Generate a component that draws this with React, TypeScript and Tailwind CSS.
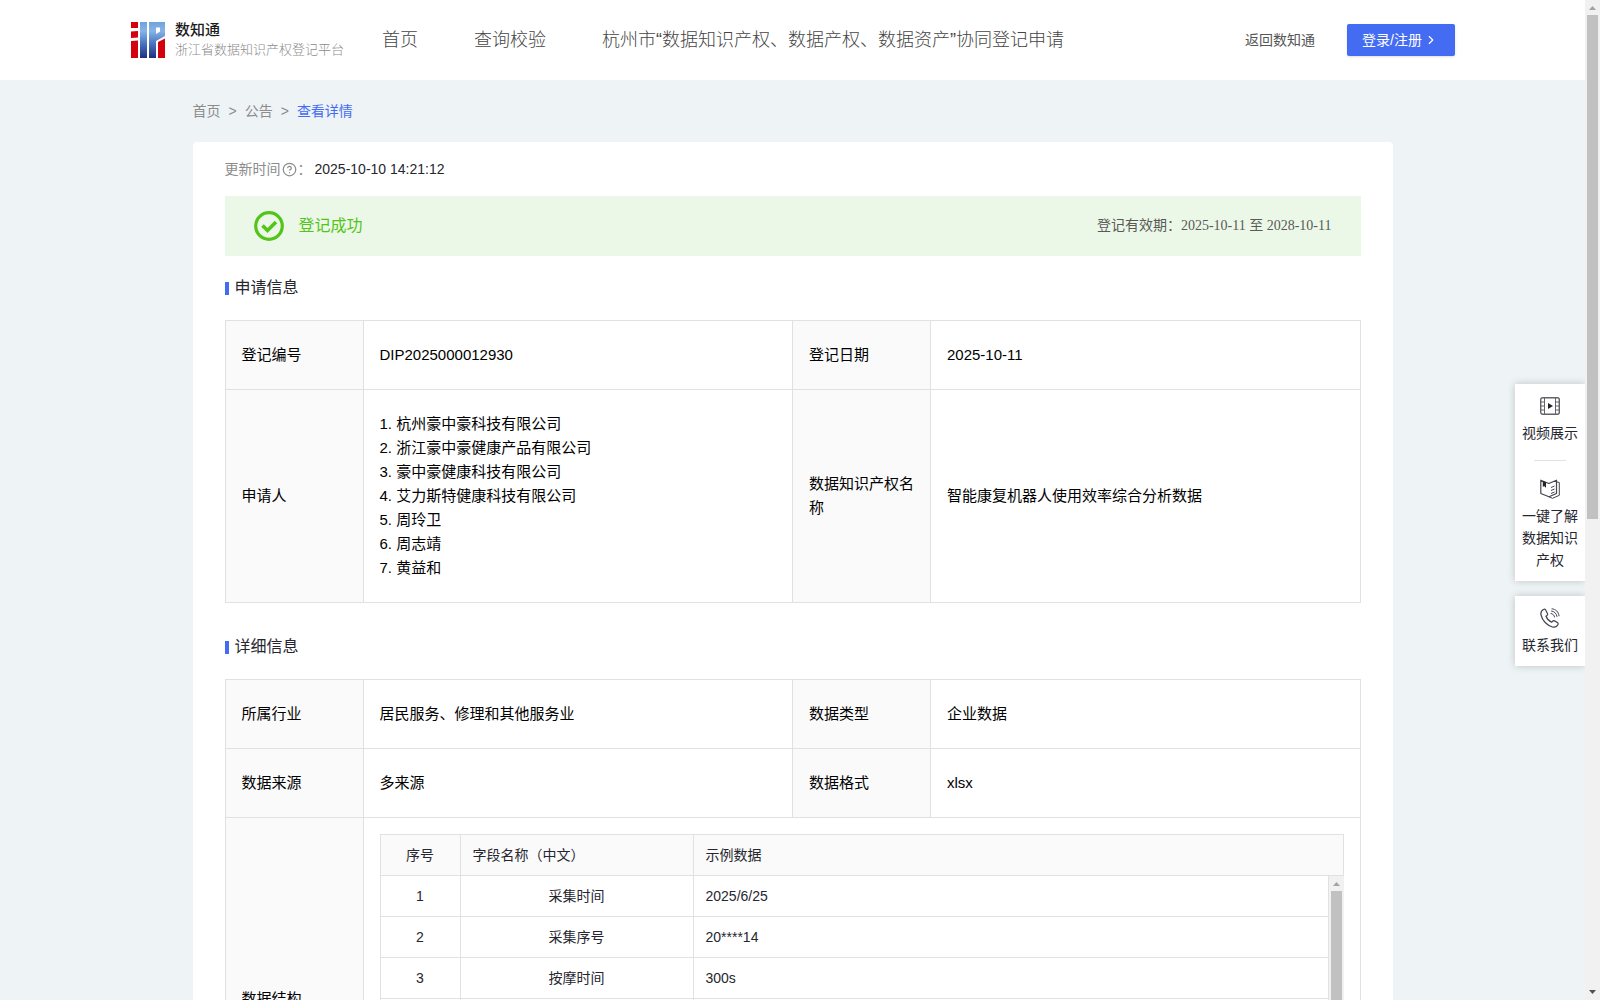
import React from 'react';
import { ChevronRight, CircleHelp } from 'lucide-react';

const cell = 'border border-[#e1e1e1] px-4 py-[22px] text-left font-normal align-middle';
const labelCell = `${cell} bg-[#fafafa]`;
const gridCell = 'border border-[#e1e1e1] px-3 h-[41px] font-normal';

const APPLICANTS = [
  '杭州豪中豪科技有限公司',
  '浙江豪中豪健康产品有限公司',
  '豪中豪健康科技有限公司',
  '艾力斯特健康科技有限公司',
  '周玲卫',
  '周志靖',
  '黄益和',
];

const FIELDS = [
  { id: '1', name: '采集时间', sample: '2025/6/25' },
  { id: '2', name: '采集序号', sample: '20****14' },
  { id: '3', name: '按摩时间', sample: '300s' },
  { id: '', name: '', sample: '' },
];

const Logo = () => (
  <svg width="34" height="36" viewBox="0 0 34 36" aria-hidden="true">
    <defs>
      <linearGradient id="logo-blue" gradientUnits="userSpaceOnUse" x1="0" y1="0" x2="0" y2="36">
        <stop offset="0" stopColor="#6fa3dc" />
        <stop offset="0.25" stopColor="#86b4e8" />
        <stop offset="0.6" stopColor="#4b74bd" />
        <stop offset="1" stopColor="#1f2f80" />
      </linearGradient>
    </defs>
    <path d="M0 0h7v6H0zM0 9.500l7-.5v6.500l-7 .5zM0 19l7-.5V36H0z" fill="#d3000d" />
    <path d="M9 0h7v36H9z" fill="url(#logo-blue)" />
    <path d="M18 0h16v14l-9 5v17h-7zM25 5.500V12l4-2.500v-4z" fillRule="evenodd" fill="url(#logo-blue)" />
    <path d="M27 20l7-3.500V36h-7z" fill="#d3000d" />
  </svg>
);

const VideoIcon = () => (
  <svg width="20" height="20" viewBox="0 0 20 20" fill="none" stroke="#62626a" aria-hidden="true">
    <rect x="0.700" y="1.700" width="18.600" height="16.600" rx="2" strokeWidth="1.400" />
    <path d="M4.500 1.500v17M15.500 1.500v17M1 6h3.500M1 10h3.500M1 14h3.500M15.500 6H19M15.500 10H19M15.500 14H19" />
    <path d="M8 7l5 3-5 3z" fill="#23232b" stroke="none" />
  </svg>
);

const BookIcon = () => (
  <svg width="20" height="20" viewBox="0 0 20 20" fill="none" stroke="#44444c" strokeLinejoin="round" aria-hidden="true">
    <path d="M.8 1.200l8 3.300 7.700-3.300v13.300l-7.500 3.300-8.200-3.300z" strokeWidth="1.200" />
    <path d="M17 3l2.300.5v12.800L12.500 19.300 9 17.800M11 8.500L14.500 7M11 11.500l3.500-1.500M11 14.500l3.500-1.500" />
    <path d="M2.800 2L6 3.300v5.500L4.400 7.200 2.800 7.800z" fill="#23232b" stroke="none" />
  </svg>
);

const PhoneIcon = () => (
  <svg width="20" height="20" viewBox="0 0 20 20" fill="none" stroke="#44444c" strokeLinecap="round" aria-hidden="true">
    <path
      d="M3.500 1.500c-2 1-3 3-2.500 5.500C2.300 12.500 7 17.500 12.500 19c2.500.6 4.500-.5 5.500-2.500.3-.8 0-1.500-.6-1.900l-2.900-1.700c-.8-.4-1.500-.2-2 .4l-.8 1c-2.700-1.200-4.700-3.300-5.700-6l1-.8c.6-.5.8-1.200.4-2L5.700 2c-.5-.8-1.300-1-2.200-.5z"
      strokeWidth="1.200"
    />
    <path d="M11 5.500c2 .3 3.300 1.700 3.500 3.500M11.500 3c3 .4 5 2.500 5.500 5.500M12 .8c4 .4 6.500 3 7 7" />
  </svg>
);

const SuccessIcon = () => (
  <svg width="30" height="30" viewBox="0 0 30 30" fill="none" stroke="#52c41a" aria-hidden="true">
    <circle cx="15" cy="15" r="13.300" strokeWidth="3.200" />
    <path d="M8.500 14.500l5 5 8.500-8.500" strokeWidth="3.600" />
  </svg>
);

const Arrow = ({ down = false, color }: { down?: boolean; color: string }) => (
  <svg width="15" height="15" viewBox="0 0 15 15" className="shrink-0" aria-hidden="true">
    <path d={down ? 'M4 5h7l-3.500 4z' : 'M4 10h7L7.500 6z'} fill={color} />
  </svg>
);

const SectionTitle = ({ children }: { children: React.ReactNode }) => (
  <h2 className="flex h-[23px] items-center gap-[6px] text-base text-[#26262f]">
    <span className="mt-px h-[13px] w-1 bg-[#446cf3]" />
    {children}
  </h2>
);

const Columns = () => (
  <colgroup>
    <col className="w-[138px]" />
    <col />
    <col className="w-[138px]" />
    <col />
  </colgroup>
);

const Header = () => (
  <header className="flex h-20 items-center bg-white pr-[130px] pl-[131px] text-[#555]">
    <a href="#" className="flex items-center gap-[10px]">
      <Logo />
      <span className="flex flex-col">
        <span className="text-[15px] leading-5 font-medium text-[#1c1c1c]">数知通</span>
        <span className="text-[13px] leading-5 font-light text-[#8c8c8c]">浙江省数据知识产权登记平台</span>
      </span>
    </a>
    <nav className="ml-[38px] flex gap-14 text-lg font-light whitespace-nowrap text-[#444]">
      <a href="#">首页</a>
      <a href="#">查询校验</a>
      <a href="#">杭州市“数据知识产权、数据产权、数据资产”协同登记申请</a>
    </nav>
    <a href="#" className="ml-auto text-sm whitespace-nowrap">返回数知通</a>
    <button className="ml-8 flex h-8 w-[108px] items-center gap-[2px] rounded-xs bg-[#446cf3] pl-[15px] text-sm text-white shadow-sm">
      登录/注册
      <ChevronRight size={14} />
    </button>
  </header>
);

const FieldTable = () => (
  <div className="text-sm text-[#26262f]">
    <table className="w-full table-fixed border-collapse bg-[#fafafa]">
      <thead>
        <tr>
          <th className={`${gridCell} w-20 text-center`}>序号</th>
          <th className={`${gridCell} w-[233px] text-left`}>字段名称（中文）</th>
          <th className={`${gridCell} text-left`}>示例数据</th>
        </tr>
      </thead>
    </table>
    <div className="flex h-72 overflow-hidden">
      <table className="-mt-px w-full table-fixed border-collapse self-start">
        <tbody>
          {FIELDS.map((field, i) => (
            <tr key={i}>
              <td className={`${gridCell} w-20 text-center`}>{field.id}</td>
              <td className={`${gridCell} w-[233px] text-center`}>{field.name}</td>
              <td className={gridCell}>{field.sample}</td>
            </tr>
          ))}
        </tbody>
      </table>
      <div className="flex w-[15px] shrink-0 flex-col bg-[#f1f1f1]">
        <Arrow color="#a3a3a3" />
        <div className="mx-[2px] flex-1 bg-[#c1c1c1]" />
      </div>
    </div>
  </div>
);

const SideTools = () => (
  <aside className="absolute top-[384px] right-0 flex w-[70px] flex-col gap-[15px] text-sm leading-[22px] text-[#26262f]">
    <div className="flex flex-col items-center bg-white px-[7px] pt-3 pb-[10px] shadow-[0_0_8px_rgba(0,0,0,0.2)]">
      <a href="#" className="flex flex-col items-center gap-[6px] text-center">
        <VideoIcon />
        视频展示
      </a>
      <div className="mt-4 mb-[18px] h-px w-8 bg-[#e1e1e1]" />
      <a href="#" className="flex flex-col items-center gap-[6px] text-center">
        <BookIcon />
        一键了解数据知识产权
      </a>
    </div>
    <a href="#" className="flex flex-col items-center gap-[6px] bg-white pt-3 pb-[10px] shadow-[0_0_8px_rgba(0,0,0,0.2)]">
      <PhoneIcon />
      联系我们
    </a>
  </aside>
);

const App: React.FC = () => {
  return (
    <div className="flex h-screen overflow-hidden bg-[#eef3f6] font-['Liberation_Sans','Noto_Sans_CJK_SC',sans-serif]">
      <div className="relative min-w-0 flex-1 overflow-hidden">
        <Header />
        <main className="mx-auto max-w-[1200px]">
          <nav className="flex h-[62px] items-center gap-2 text-sm text-[#8c8c8c]">
            <a href="#">首页</a>
            <span>&gt;</span>
            <a href="#">公告</a>
            <span>&gt;</span>
            <a href="#" className="text-[#446cf3]">查看详情</a>
          </nav>

          <div className="rounded bg-white px-8 pt-4 pb-8">
            <div className="flex h-[22px] items-center text-sm text-[#8c8c8c]">
              更新时间
              <CircleHelp size={15} className="mx-px" />
              ：<span className="ml-[3px] text-[#26262f]">2025-10-10 14:21:12</span>
            </div>

            <div className="mt-4 flex h-[60px] items-center bg-[#ecf8e7] px-[29px]">
              <SuccessIcon />
              <span className="ml-[15px] text-base text-[#52c41a]">登记成功</span>
              <span className="ml-auto font-['Liberation_Serif','Noto_Sans_CJK_SC',serif] text-sm text-[#595959]">
                登记有效期：2025-10-11 至 2028-10-11
              </span>
            </div>

            <div className="mt-5">
              <SectionTitle>申请信息</SectionTitle>
            </div>
            <table className="mt-[21px] w-full table-fixed border-collapse text-[15px] leading-6 text-black">
              <Columns />
              <tbody>
                <tr>
                  <th className={labelCell}>登记编号</th>
                  <td className={cell}>DIP2025000012930</td>
                  <th className={labelCell}>登记日期</th>
                  <td className={cell}>2025-10-11</td>
                </tr>
                <tr>
                  <th className={labelCell}>申请人</th>
                  <td className={cell}>
                    {APPLICANTS.map((name, i) => (
                      <div key={name}>{i + 1}. {name}</div>
                    ))}
                  </td>
                  <th className={labelCell}>数据知识产权名称</th>
                  <td className={cell}>智能康复机器人使用效率综合分析数据</td>
                </tr>
              </tbody>
            </table>

            <div className="mt-8">
              <SectionTitle>详细信息</SectionTitle>
            </div>
            <table className="mt-[21px] w-full table-fixed border-collapse text-[15px] leading-6 text-black">
              <Columns />
              <tbody>
                <tr>
                  <th className={labelCell}>所属行业</th>
                  <td className={cell}>居民服务、修理和其他服务业</td>
                  <th className={labelCell}>数据类型</th>
                  <td className={cell}>企业数据</td>
                </tr>
                <tr>
                  <th className={labelCell}>数据来源</th>
                  <td className={cell}>多来源</td>
                  <th className={labelCell}>数据格式</th>
                  <td className={cell}>xlsx</td>
                </tr>
                <tr>
                  <th className={labelCell}>数据结构</th>
                  <td colSpan={3} className="border border-[#e1e1e1] p-4">
                    <FieldTable />
                  </td>
                </tr>
              </tbody>
            </table>
          </div>
        </main>
        <SideTools />
      </div>

      <div className="flex w-[15px] shrink-0 flex-col bg-[#f1f1f1]">
        <Arrow color="#a3a3a3" />
        <div className="min-h-0 flex-1">
          <div className="mx-[2px] h-[52%] bg-[#c1c1c1]" />
        </div>
        <Arrow down color="#505050" />
      </div>
    </div>
  );
};

export default App;
